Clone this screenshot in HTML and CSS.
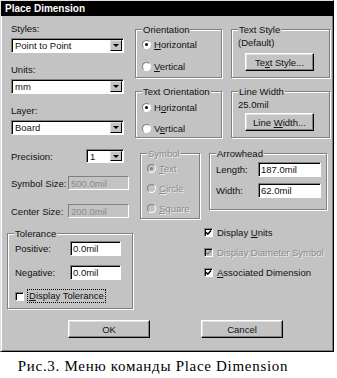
FILE: index.html
```html
<!DOCTYPE html>
<html>
<head>
  <title>Place Dimension</title>
  <meta charset="UTF-8">
  <link rel="stylesheet" href="styles.css">
</head>
<body>
  <div class="dialog">
    <div class="titlebar">Place Dimension</div>
    <div class="dialog-body">

      <div class="row row-top">
        <div class="fields">
          <div class="field-label">Styles:</div>
          <div class="combo">
            <span class="combo-text">Point to Point</span>
            <span class="combo-btn"><span class="arrow"></span></span>
          </div>
          <div class="field-label">Units:</div>
          <div class="combo">
            <span class="combo-text">mm</span>
            <span class="combo-btn"><span class="arrow"></span></span>
          </div>
          <div class="field-label">Layer:</div>
          <div class="combo">
            <span class="combo-text">Board</span>
            <span class="combo-btn"><span class="arrow"></span></span>
          </div>
        </div>

        <div class="group-grid">
          <div class="group group-radios group-orient">
            <span class="group-title">Orientation</span>
            <div class="option"><span class="radio checked"></span><span><u>H</u>orizontal</span></div>
            <div class="option"><span class="radio"></span><span><u>V</u>ertical</span></div>
          </div>
          <div class="group group-info">
            <span class="group-title">Text Style</span>
            <div class="info-text">(Default)</div>
            <div class="btn btn-small"><span>Te<u>x</u>t Style...</span></div>
          </div>
          <div class="group group-radios group-textorient">
            <span class="group-title">Text Orientation</span>
            <div class="option"><span class="radio checked"></span><span>H<u>o</u>rizontal</span></div>
            <div class="option"><span class="radio"></span><span>V<u>e</u>rtical</span></div>
          </div>
          <div class="group group-info group-linewidth">
            <span class="group-title">Line Width</span>
            <div class="info-text">25.0mil</div>
            <div class="btn btn-small"><span>Line <u>W</u>idth...</span></div>
          </div>
        </div>
      </div>

      <div class="row row-mid">
        <div class="props">
          <div class="prop prop-precision">
            <span class="prop-label">Precision:</span>
            <div class="combo combo-small">
              <span class="combo-text">1</span>
              <span class="combo-btn"><span class="arrow"></span></span>
            </div>
          </div>
          <div class="prop prop-size">
            <span class="prop-label">Symbol Size:</span>
            <div class="edit edit-size disabled">500.0mil</div>
          </div>
          <div class="prop prop-size">
            <span class="prop-label">Center Size:</span>
            <div class="edit edit-size disabled">200.0mil</div>
          </div>
        </div>

        <div class="group group-symbol">
          <span class="group-title disabled-text">Symbol</span>
          <div class="option disabled-text"><span class="radio checked off"></span><span><u>T</u>ext</span></div>
          <div class="option disabled-text"><span class="radio off"></span><span><u>C</u>ircle</span></div>
          <div class="option disabled-text"><span class="radio off"></span><span><u>S</u>quare</span></div>
        </div>

        <div class="group group-arrow">
          <span class="group-title">Arrowhead</span>
          <div class="pair">
            <span class="pair-label">Length:</span>
            <div class="edit edit-arrow">187.0mil</div>
          </div>
          <div class="pair">
            <span class="pair-label">Width:</span>
            <div class="edit edit-arrow">62.0mil</div>
          </div>
        </div>
      </div>

      <div class="row row-low">
        <div class="group group-tol">
          <span class="group-title">Tolerance</span>
          <div class="pair">
            <span class="pair-label tol-label">Positive:</span>
            <div class="edit edit-tol">0.0mil</div>
          </div>
          <div class="pair">
            <span class="pair-label tol-label">Negative:</span>
            <div class="edit edit-tol">0.0mil</div>
          </div>
          <div class="check-row tol-check">
            <span class="checkbox"></span>
            <span class="focus"><u>D</u>isplay Tolerance</span>
          </div>
        </div>

        <div class="checks">
          <div class="check-row">
            <span class="checkbox"><svg viewBox="0 0 7 7"><path d="M1 3.2 L2.8 5.2 L6 1.4" /></svg></span>
            <span>Display <u>U</u>nits</span>
          </div>
          <div class="check-row disabled-text">
            <span class="checkbox off"><svg viewBox="0 0 7 7"><path d="M1 3.2 L2.8 5.2 L6 1.4" /></svg></span>
            <span>Display Diameter Symbol</span>
          </div>
          <div class="check-row">
            <span class="checkbox"><svg viewBox="0 0 7 7"><path d="M1 3.2 L2.8 5.2 L6 1.4" /></svg></span>
            <span><u>A</u>ssociated Dimension</span>
          </div>
        </div>
      </div>

      <div class="buttons">
        <div class="btn btn-wide">OK</div>
        <div class="btn btn-wide">Cancel</div>
      </div>

    </div>
  </div>

  <div class="caption">Рис.3. Меню команды Place Dimension</div>
</body>
</html>
```

FILE: styles.css
```css
* {
  margin: 0;
  padding: 0;
  box-sizing: border-box;
}

body {
  background: #fff;
  font-family: "Liberation Sans", Arial, sans-serif;
  font-size: 9.5px;
  color: #111;
}

u {
  text-decoration: underline;
  text-underline-offset: 1px;
}

.dialog {
  width: 334px;
  height: 352px;
  background: #c3c3c3;
  border: 1px solid;
  border-color: #dfdfdf #000 #000 #dfdfdf;
  box-shadow: inset 1px 1px 0 #fff, inset -1px -1px 0 #808080;
}

.titlebar {
  height: 15px;
  background: #000;
  color: #fff;
  font-weight: bold;
  font-size: 10px;
  line-height: 15px;
  padding-left: 4px;
}

.dialog-body {
  padding-left: 6px;
}

.row {
  display: flex;
  align-items: flex-start;
}

/* top block */

.fields {
  width: 113px;
  margin: 7px 0 0 4px;
}

.field-label {
  height: 11px;
  line-height: 11px;
  margin-bottom: 4px;
}

.fields .combo {
  margin-bottom: 11px;
}

.fields .combo:last-child {
  margin-bottom: 0;
}

.combo {
  display: flex;
  height: 15px;
  background: #fff;
  border: 1px solid;
  border-color: #808080 #fff #fff #808080;
  box-shadow: inset 1px 1px 0 #000;
}

.combo-text {
  flex: 1;
  padding-left: 3px;
  line-height: 13px;
}

.combo-btn {
  width: 12px;
  margin: 1px;
  background: #c3c3c3;
  border: 1px solid;
  border-color: #dfdfdf #000 #000 #dfdfdf;
  display: flex;
  align-items: center;
  justify-content: center;
}

.arrow {
  border-left: 3px solid transparent;
  border-right: 3px solid transparent;
  border-top: 3px solid #000;
}

.group-grid {
  display: grid;
  grid-template-columns: 87px 99px;
  grid-template-rows: 49px 47px;
  column-gap: 9px;
  row-gap: 13px;
  margin: 13px 0 0 11px;
}

.group {
  position: relative;
  border: 1px solid #808080;
  box-shadow: 1px 1px 0 #fff, inset 1px 1px 0 #fff;
}

.group-title {
  position: absolute;
  top: -6px;
  left: 6px;
  padding: 0 1px;
  background: #c3c3c3;
  line-height: 11px;
}

.group-radios {
  padding: 3px 0 0 6px;
}

.group-radios .option {
  height: 22px;
}

.group-textorient {
  padding-top: 5px;
}

.group-textorient .option {
  height: 21px;
}

.option {
  display: flex;
  align-items: center;
}

.radio {
  flex: none;
  position: relative;
  width: 9px;
  height: 9px;
  margin-right: 3px;
  border-radius: 50%;
  background: #fff;
  border: 1px solid;
  border-color: #808080 #fff #fff #808080;
}

.radio.checked::after {
  content: "";
  position: absolute;
  left: 2px;
  top: 2px;
  width: 3px;
  height: 3px;
  border-radius: 50%;
  background: #000;
}

.radio.off {
  background: #c3c3c3;
}

.radio.off::after {
  background: #808080;
}

.group-info {
  padding: 7px 6px 0;
}

.info-text {
  line-height: 11px;
  margin-bottom: 5px;
}

.group-linewidth .info-text {
  margin-bottom: 3px;
}

.btn {
  display: flex;
  align-items: center;
  justify-content: center;
  background: #c3c3c3;
  border: 1px solid;
  border-color: #fff #000 #000 #fff;
  box-shadow: inset -1px -1px 0 #808080, inset 1px 1px 0 #dfdfdf;
}

.btn-small {
  width: 69px;
  height: 18px;
  margin-left: 7px;
}

/* middle block */

.row-mid .props {
  width: 118px;
  margin: 11px 0 0 4px;
}

.prop {
  display: flex;
  align-items: center;
  justify-content: space-between;
}

.prop-precision {
  height: 14px;
  margin-bottom: 13px;
}

.prop-precision .combo {
  width: 38px;
  height: 14px;
  margin-right: 5px;
}

.prop-size {
  height: 14px;
  margin-bottom: 14px;
}

.prop-size:last-child {
  margin-bottom: 0;
}

.edit {
  height: 15px;
  line-height: 13px;
  padding-left: 2px;
  background: #fff;
  border: 1px solid;
  border-color: #808080 #fff #fff #808080;
  box-shadow: inset 1px 1px 0 #000;
}

.edit.disabled {
  height: 14px;
  background: #c3c3c3;
  color: #8a8a8a;
  box-shadow: none;
}

.edit-size {
  width: 61px;
}

.disabled-text {
  color: #8a8a8a;
  text-shadow: 1px 1px 0 #eee;
}

.group-symbol {
  width: 60px;
  height: 66px;
  margin: 15px 0 0 11px;
  padding: 4px 0 0 6px;
}

.group-symbol .option {
  height: 20px;
}

.group-arrow {
  width: 118px;
  height: 57px;
  margin: 15px 0 0 9px;
  padding: 8px 0 0 6px;
}

.pair {
  display: flex;
  align-items: center;
  margin-bottom: 6px;
}

.pair-label {
  width: 42px;
}

.edit-arrow {
  width: 63px;
}

/* lower block */

.group-tol {
  width: 126px;
  height: 76px;
  margin-top: 14px;
  padding: 7px 0 0 7px;
}

.group-tol .pair {
  margin-bottom: 9px;
}

.tol-label {
  width: 55px;
}

.edit-tol {
  width: 51px;
}

.check-row {
  display: flex;
  align-items: center;
  height: 20px;
}

.tol-check {
  height: 14px;
  margin-top: 1px;
}

.checkbox {
  flex: none;
  width: 9px;
  height: 9px;
  margin-right: 4px;
  background: #fff;
  border: 1px solid;
  border-color: #808080 #fff #fff #808080;
  box-shadow: inset 1px 1px 0 #000;
  display: flex;
}

.checkbox svg {
  width: 7px;
  height: 7px;
}

.checkbox path {
  fill: none;
  stroke: #000;
  stroke-width: 1.5;
}

.checkbox.off {
  background: #c3c3c3;
}

.checkbox.off path {
  stroke: #808080;
}

.focus {
  outline: 1px dotted #000;
  padding: 0 1px;
  line-height: 12px;
}

.checks {
  margin: 3px 0 0 71px;
}

.buttons {
  display: flex;
  gap: 51px;
  margin: 11px 0 0 61px;
}

.btn-wide {
  width: 82px;
  height: 18px;
}

.caption {
  width: 306px;
  margin-top: 5px;
  text-align: center;
  font-family: "Liberation Serif", "Times New Roman", serif;
  font-size: 15px;
  letter-spacing: 0.7px;
  line-height: 18px;
  color: #000;
}
```
